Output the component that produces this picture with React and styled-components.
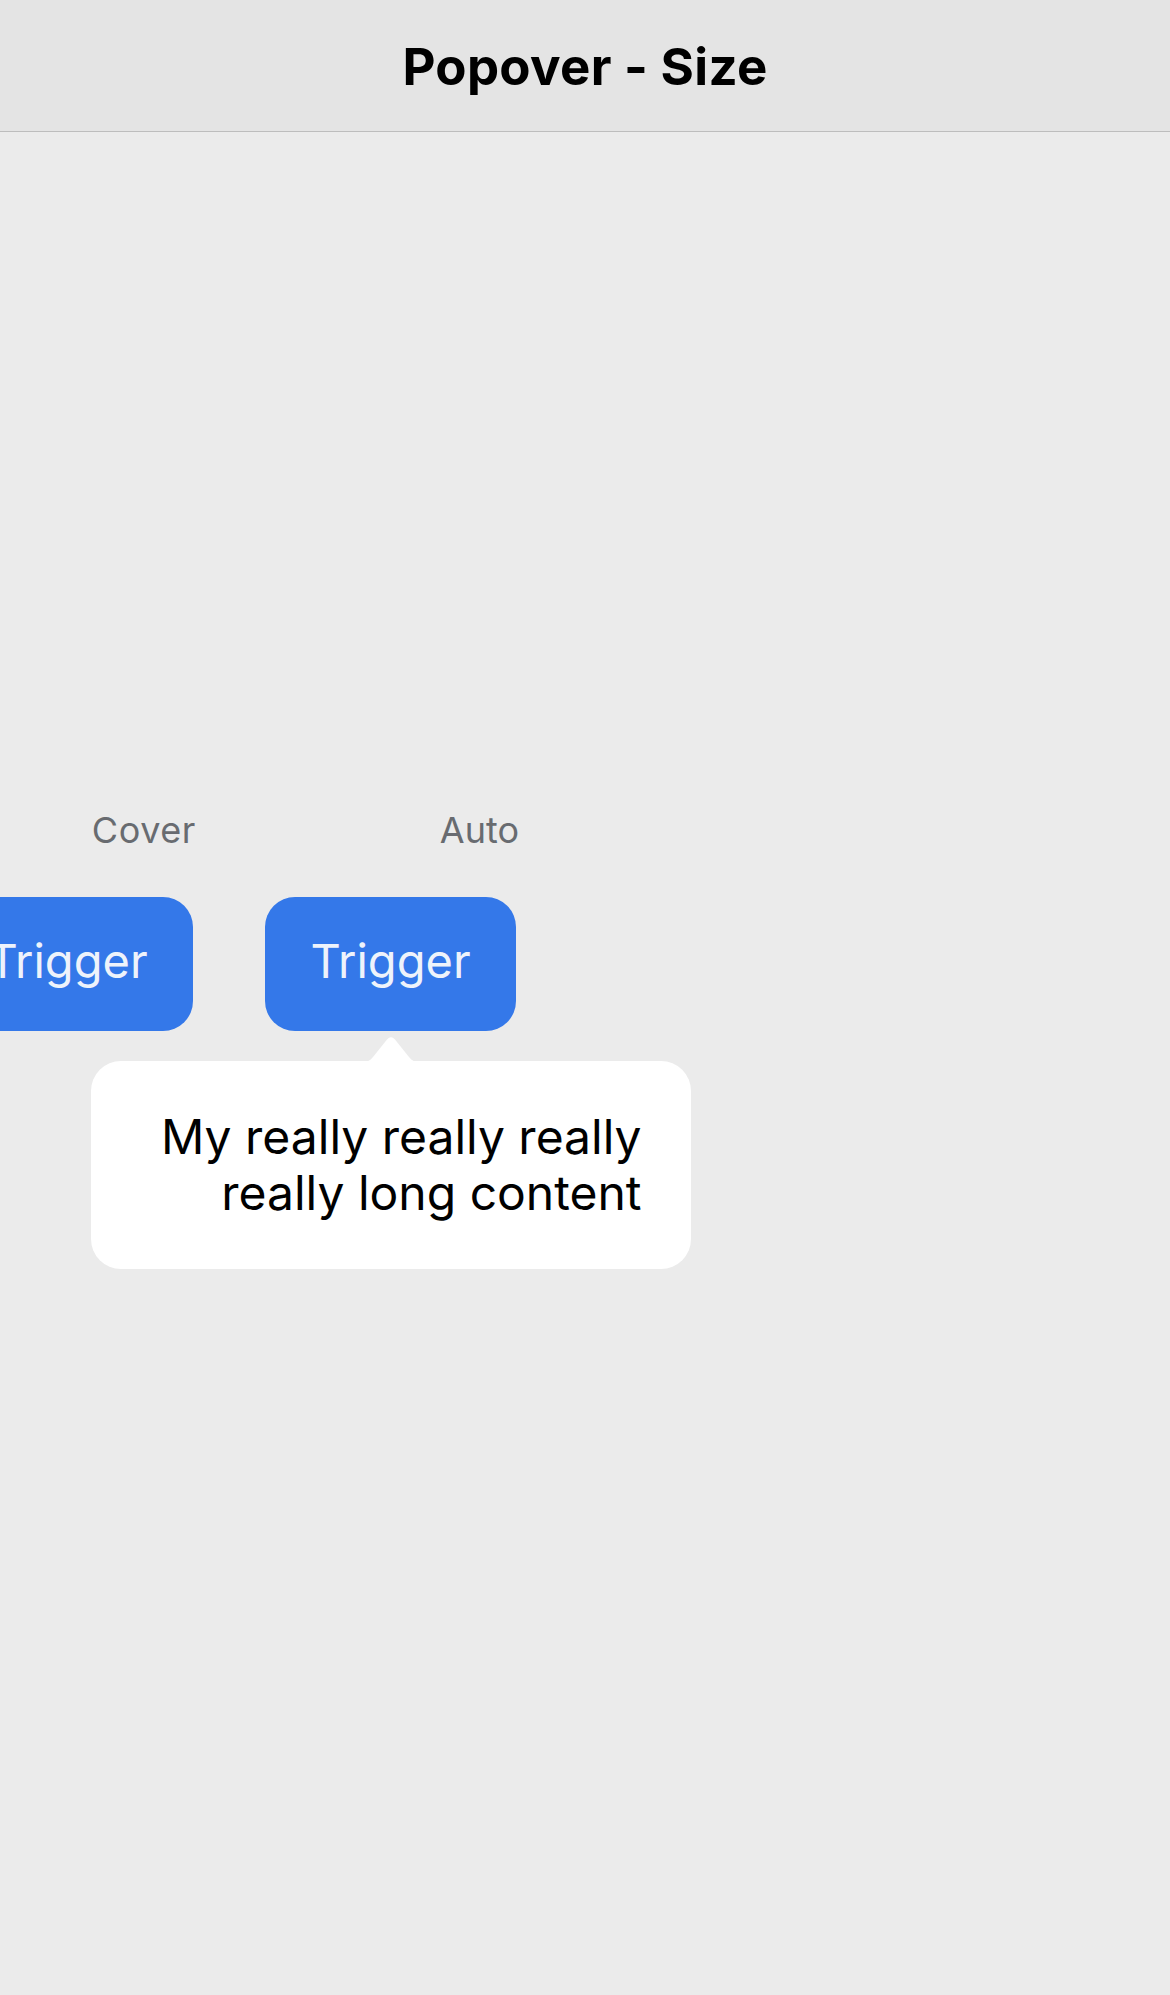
import styled, { createGlobalStyle } from "styled-components";

const GlobalStyle = createGlobalStyle`
  html, body {
    margin: 0;
    padding: 0;
  }
  body {
    background: #ebebeb;
    font-family: Inter, "Noto Sans", sans-serif;
    overflow: hidden;
    min-height: 1995px;
  }
`;

const Header = styled.header`
  height: 131px;
  background: #e4e4e4;
  border-bottom: 1px solid #bdbdbd;
  display: flex;
  align-items: center;
  justify-content: center;
`;

const Title = styled.h1`
  margin: 0;
  font-size: 51px;
  font-weight: 700;
  color: #000;
  letter-spacing: 0.3px;
  transform: translateY(1px);
`;

const Content = styled.main`
  padding-top: 676px;
`;

const Row = styled.div`
  display: flex;
  direction: rtl;
  gap: 72px;
  padding-right: 654px;
`;

const Column = styled.div`
  position: relative;
  flex: 0 0 251px;
  display: flex;
  flex-direction: column;
  gap: 45px;
`;

const Label = styled.div`
  font-size: 36px;
  line-height: 44px;
  color: #686b70;
  margin-right: -3px;
  letter-spacing: ${(p) => (p.$wide ? "0.6px" : "0")};
`;

const Trigger = styled.button`
  height: 134px;
  width: 251px;
  box-sizing: border-box;
  border: 0;
  border-radius: 30px;
  background: #3478e9;
  color: #eef3fb;
  font-family: inherit;
  font-size: 47px;
  line-height: 128px;
  padding: 0 0 6px;
`;

const Popover = styled.div`
  position: absolute;
  top: calc(100% + 30px);
  left: 50%;
  transform: translateX(-50%);
  width: 600px;
  box-sizing: border-box;
  background: #fff;
  border-radius: 30px;
  padding: 48px 49px 48px 48px;
  font-size: 48px;
  line-height: 56px;
  color: #000;
  text-align: start;
`;

const Arrow = styled.svg`
  position: absolute;
  top: -25px;
  left: 50%;
  transform: translateX(-50%);
  display: block;
`;

const PopoverArrow = () => (
  <Arrow width="58" height="26" viewBox="0 0 58 26">
    <path
      d="M0 26 C5 26 8 25 11 21 L25 3.5 Q29 -1 33 3.5 L47 21 C50 25 53 26 58 26 Z"
      fill="#fff"
    />
  </Arrow>
);

const demos = [
  { label: "Auto", open: true, wide: false },
  { label: "Cover", open: false, wide: true },
];

export default function App() {
  return (
    <>
      <GlobalStyle />
      <Header>
        <Title>Popover - Size</Title>
      </Header>
      <Content>
        <Row>
          {demos.map((d) => (
            <Column key={d.label}>
              <Label $wide={d.wide}>{d.label}</Label>
              <Trigger>Trigger</Trigger>
              {d.open && (
                <Popover>
                  <PopoverArrow />
                  My really really really really long content
                </Popover>
              )}
            </Column>
          ))}
        </Row>
      </Content>
    </>
  );
}
